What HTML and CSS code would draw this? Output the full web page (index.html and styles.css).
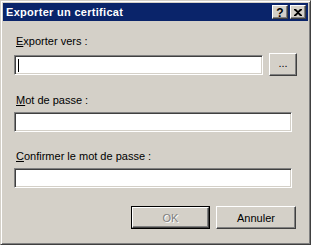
FILE: index.html
```html
<!DOCTYPE html>
<html lang="fr">
<head>
    <meta charset="UTF-8">
    <title>Exporter un certificat</title>
    <link rel="stylesheet" href="styles.css">
</head>
<body>
    <div class="window">
        <div class="titlebar">
            <span class="title">Exporter un certificat</span>
            <div class="caption-buttons">
                <span class="cap-btn help">?</span>
                <span class="cap-btn close">
                    <svg width="8" height="7" viewBox="0 0 8 7">
                        <path d="M0 0h2l2 2 2-2h2v1L5 3.5 8 6v1H6L4 5 2 7H0V6l3-2.5L0 1z" fill="#000"/>
                    </svg>
                </span>
            </div>
        </div>

        <div class="content">
            <div class="label first"><u>E</u>xporter vers :</div>
            <div class="row">
                <div class="field"><span class="caret"></span></div>
                <button class="btn browse">...</button>
            </div>

            <div class="label"><u>M</u>ot de passe :</div>
            <div class="field wide"></div>

            <div class="label"><u>C</u>onfirmer le mot de passe :</div>
            <div class="field wide"></div>

            <div class="actions">
                <div class="default-frame">
                    <button class="btn ok" disabled>OK</button>
                </div>
                <button class="btn cancel">Annuler</button>
            </div>
        </div>
    </div>
</body>
</html>
```

FILE: styles.css
```css
* {
    box-sizing: border-box;
}
body {
    margin: 0;
    font-family: "Liberation Sans", Arial, sans-serif;
    font-size: 11px;
    color: #000;
    background: #d4d0c8;
}
.window {
    width: 311px;
    height: 245px;
    background: #d4d0c8;
    border: 1px solid;
    border-color: #d4d0c8 #404040 #404040 #d4d0c8;
    box-shadow: inset 1px 1px #fff, inset -1px -1px #808080;
    padding: 2px;
}
.titlebar {
    height: 18px;
    background: #0a246a;
    color: #fff;
    display: flex;
    align-items: center;
    justify-content: space-between;
    padding: 0 2px 0 2px;
}
.title {
    font-weight: bold;
    font-size: 11px;
    letter-spacing: 0.3px;
    padding-left: 1px;
}
.caption-buttons {
    display: flex;
    gap: 2px;
}
.cap-btn {
    width: 16px;
    height: 14px;
    background: #d4d0c8;
    border: 1px solid;
    border-color: #fff #404040 #404040 #fff;
    box-shadow: inset -1px -1px #808080;
    color: #000;
    display: flex;
    align-items: center;
    justify-content: center;
    font-weight: bold;
    font-size: 12px;
    line-height: 1;
}
.help {
    padding-top: 1px;
}
.content {
    padding: 14px 11px 0 11px;
}
.label {
    height: 13px;
    line-height: 13px;
    padding-left: 2px;
    margin-bottom: 5px;
}
.label u {
    text-decoration-thickness: 1px;
    text-underline-offset: 1px;
}
.row {
    display: flex;
    align-items: flex-start;
    gap: 6px;
    margin-bottom: 18px;
}
.field {
    height: 20px;
    background: #fff;
    border: 1px solid;
    border-color: #808080 #fff #fff #808080;
    box-shadow: inset 1px 1px #404040, inset -1px -1px #d4d0c8;
    flex: 1;
    padding: 3px 0 0 3px;
}
.row .field {
    margin-top: 2px;
}
.field.wide {
    margin-right: 5px;
    margin-bottom: 18px;
}
.caret {
    display: block;
    width: 1px;
    height: 13px;
    background: #000;
}
.btn {
    font-family: "Liberation Sans", Arial, sans-serif;
    font-size: 11px;
    height: 23px;
    padding: 0;
    background: #d4d0c8;
    color: #000;
    border: 1px solid;
    border-color: #fff #404040 #404040 #fff;
    box-shadow: inset -1px -1px #808080;
}
.browse {
    width: 28px;
    padding-bottom: 3px;
}
.actions {
    display: flex;
    justify-content: flex-end;
    gap: 6px;
    padding-right: 1px;
}
.default-frame {
    border: 1px solid #000;
    height: 23px;
}
.ok {
    width: 77px;
    height: 21px;
    color: #808080;
    text-shadow: 1px 1px #fff;
}
.cancel {
    width: 80px;
}
```
